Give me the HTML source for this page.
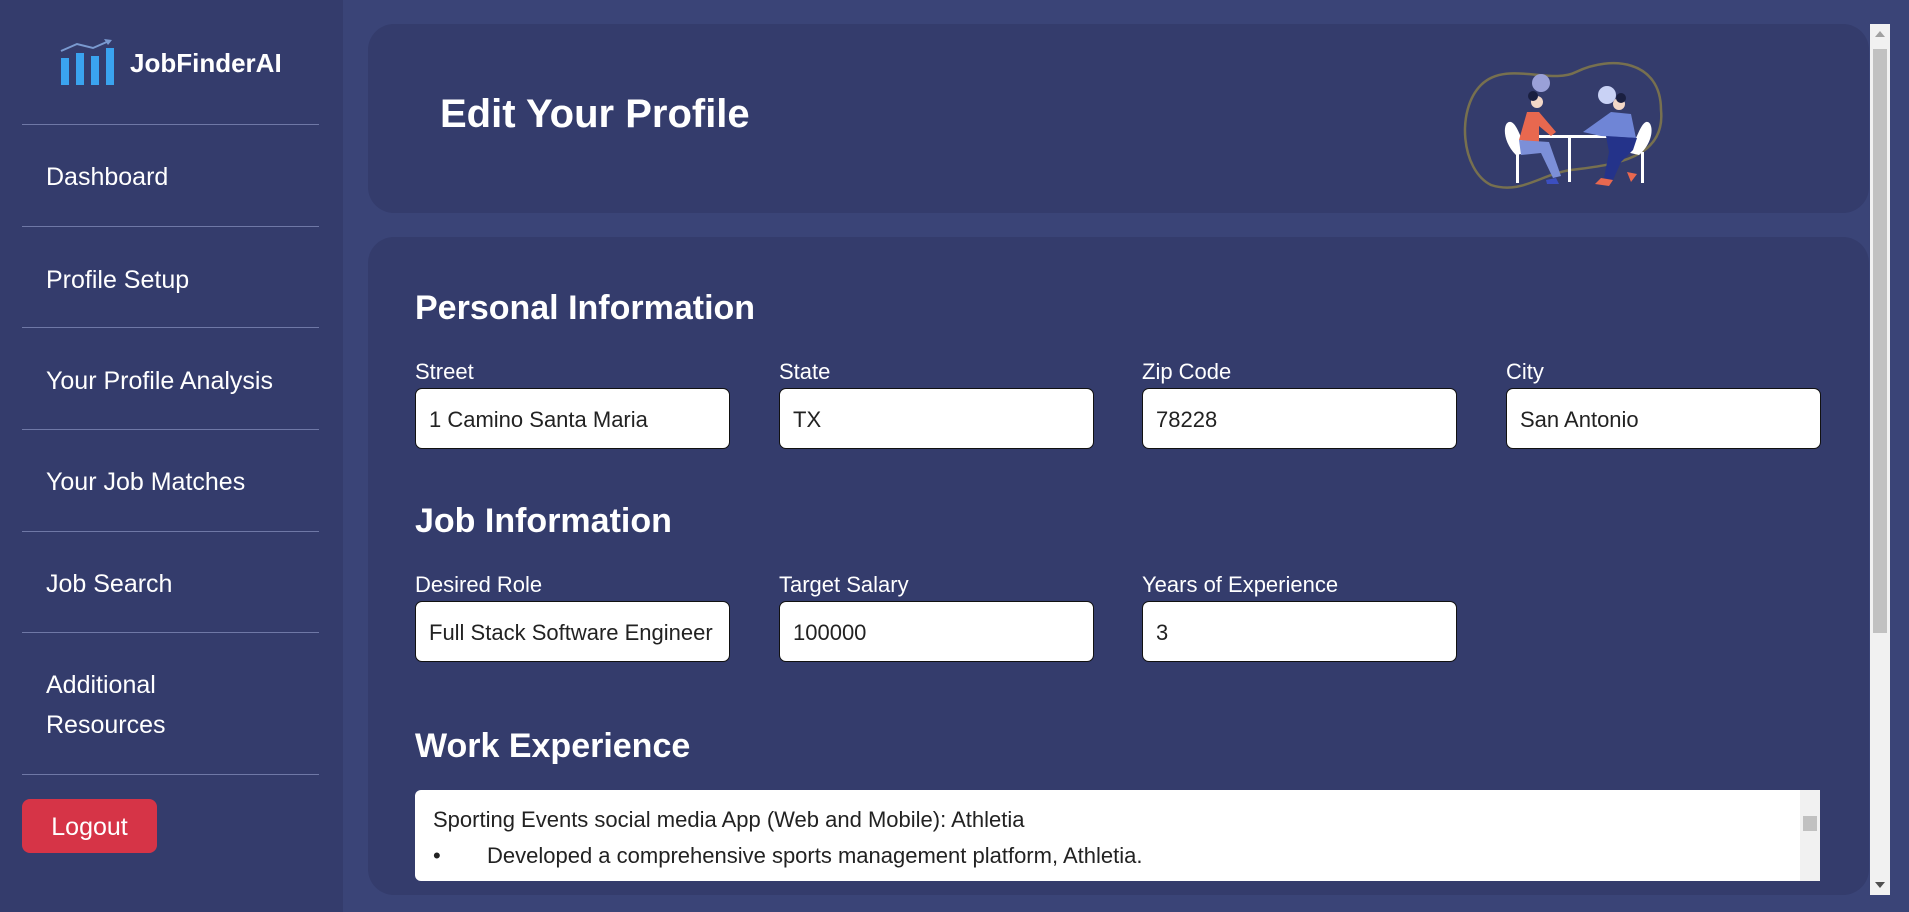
<!DOCTYPE html>
<html><head><meta charset="utf-8"><style>
*{margin:0;padding:0;box-sizing:border-box}
body{width:1909px;height:912px;overflow:hidden;background:#3a4477;font-family:"Liberation Sans",sans-serif;color:#fff;position:relative}
.side{position:absolute;left:0;top:0;width:343px;height:912px;background:#343c6c}
.hr{position:absolute;left:22px;width:297px;height:1px;background:#6f78a6}
.nav{position:absolute;left:46px;font-size:25px;line-height:40px;color:#fff}
.card{position:absolute;left:368px;width:1501px;background:#343c6c;border-radius:26px}
.h2{position:absolute;left:415px;font-size:34px;font-weight:bold;line-height:40px}
.lbl{position:absolute;font-size:22px;line-height:26px}
.inp{position:absolute;width:315px;height:61px;background:#fff;border:1.5px solid #111;border-radius:7px;color:#222;font-size:22px;line-height:62px;padding-left:13px;white-space:nowrap;overflow:hidden}
</style></head><body>
<div class="side">
<svg style="position:absolute;left:60px;top:38px" width="56" height="48" viewBox="0 0 56 48">
<rect x="1" y="20" width="8" height="27" fill="#3aa3ef"/><rect x="16" y="15" width="8" height="32" fill="#3aa3ef"/><rect x="31" y="18" width="8" height="29" fill="#3aa3ef"/><rect x="46" y="10" width="8" height="37" fill="#3aa3ef"/>
<path d="M1 13 L17 6 L33 10 L49 3" stroke="#7a9ad0" stroke-width="2" fill="none"/><path d="M44 1 L52 2 L48 7 Z" fill="#7a9ad0"/>
</svg>
<div style="position:absolute;left:130px;top:48px;font-size:26px;font-weight:bold">JobFinderAI</div>
<div class="hr" style="top:124px"></div>
<div class="nav" style="top:157px">Dashboard</div>
<div class="hr" style="top:226px"></div>
<div class="nav" style="top:260px">Profile Setup</div>
<div class="hr" style="top:327px"></div>
<div class="nav" style="top:361px">Your Profile Analysis</div>
<div class="hr" style="top:429px"></div>
<div class="nav" style="top:462px">Your Job Matches</div>
<div class="hr" style="top:531px"></div>
<div class="nav" style="top:564px">Job Search</div>
<div class="hr" style="top:632px"></div>
<div class="nav" style="top:665px">Additional</div>
<div class="nav" style="top:705px">Resources</div>
<div class="hr" style="top:774px"></div>
<div style="position:absolute;left:22px;top:799px;width:135px;height:54px;background:#d63447;border-radius:8px;font-size:25px;line-height:56px;text-align:center">Logout</div>
</div>

<div class="card" style="top:24px;height:189px">
<div style="position:absolute;left:72px;top:66px;font-size:40px;font-weight:bold;line-height:48px">Edit Your Profile</div>
<svg style="position:absolute;left:1093px;top:26px" width="215" height="140" viewBox="0 0 215 140">
<path d="M30 135 C0 120 -5 60 20 35 C45 10 90 35 115 22 C150 5 200 10 200 60 C205 110 150 115 110 120 C80 124 60 145 30 135Z" fill="none" stroke="#77704f" stroke-width="2.5"/>
<circle cx="80" cy="33" r="9" fill="#9aa0d8"/><circle cx="146" cy="45" r="9" fill="#c9d2f5"/>
<rect x="71" y="85" width="76" height="3" fill="#fff"/><rect x="107" y="87" width="3" height="45" fill="#fff"/>
<path d="M55 105 C40 90 42 70 50 72 C58 75 60 95 70 102Z" fill="#fff"/><rect x="55" y="102" width="3" height="31" fill="#fff"/>
<path d="M178 105 C195 90 192 70 185 72 C178 75 175 95 165 102Z" fill="#fff"/><rect x="180" y="102" width="3" height="31" fill="#fff"/>
<path d="M58 90 L66 62 L78 62 L95 82 L90 86 L78 76 L78 92Z" fill="#e8684f"/><path d="M58 90 L88 92 L100 126 L92 128 L80 103 L60 105Z" fill="#7c8fd8"/>
<circle cx="76" cy="52" r="6" fill="#f3d8c8"/><circle cx="72" cy="46" r="5" fill="#1a1f40"/>
<path d="M122 82 L150 62 L170 64 L175 88 L140 86Z" fill="#6f85d6"/><path d="M145 86 L176 88 L172 100 L160 112 L152 130 L143 128 L148 102Z" fill="#24338a"/>
<circle cx="158" cy="54" r="6" fill="#f3d8c8"/><circle cx="160" cy="48" r="5" fill="#1a1f40"/>
<path d="M140 128 L152 130 L148 136 L134 134Z" fill="#e8684f"/><path d="M166 122 L176 124 L170 132Z" fill="#e8684f"/>
<path d="M85 130 L95 128 L98 134 L86 134Z" fill="#3c4fc0"/>
</svg>
</div>

<div class="card" style="top:237px;height:658px"></div>
<div class="h2" style="top:288px">Personal Information</div>
<div class="lbl" style="left:415px;top:359px">Street</div>
<div class="lbl" style="left:779px;top:359px">State</div>
<div class="lbl" style="left:1142px;top:359px">Zip Code</div>
<div class="lbl" style="left:1506px;top:359px">City</div>
<div class="inp" style="left:415px;top:388px">1 Camino Santa Maria</div>
<div class="inp" style="left:779px;top:388px">TX</div>
<div class="inp" style="left:1142px;top:388px">78228</div>
<div class="inp" style="left:1506px;top:388px">San Antonio</div>

<div class="h2" style="top:501px">Job Information</div>
<div class="lbl" style="left:415px;top:572px">Desired Role</div>
<div class="lbl" style="left:779px;top:572px">Target Salary</div>
<div class="lbl" style="left:1142px;top:572px">Years of Experience</div>
<div class="inp" style="left:415px;top:601px">Full Stack Software Engineer</div>
<div class="inp" style="left:779px;top:601px">100000</div>
<div class="inp" style="left:1142px;top:601px">3</div>

<div class="h2" style="top:726px">Work Experience</div>
<div style="position:absolute;left:415px;top:790px;width:1405px;height:91px;background:#fff;border-radius:6px;color:#222;font-size:22px">
<div style="position:absolute;left:18px;top:17px">Sporting Events social media App (Web and Mobile): Athletia</div>
<div style="position:absolute;left:18px;top:53px">•</div>
<div style="position:absolute;left:72px;top:53px">Developed a comprehensive sports management platform, Athletia.</div>
<div style="position:absolute;right:0;top:0;width:20px;height:91px;background:#f1f1f1"><div style="position:absolute;left:3px;top:26px;width:14px;height:15px;background:#c1c1c1"></div></div>
</div>

<div style="position:absolute;left:1870px;top:24px;width:20px;height:871px;background:#f1f1f1">
<div style="position:absolute;left:3px;top:25px;width:14px;height:584px;background:#c1c1c1"></div>
<div style="position:absolute;left:5px;top:7px;width:0;height:0;border-left:5px solid transparent;border-right:5px solid transparent;border-bottom:6px solid #a0a0a0"></div>
<div style="position:absolute;left:5px;bottom:7px;width:0;height:0;border-left:5px solid transparent;border-right:5px solid transparent;border-top:6px solid #505050"></div>
</div>
</body></html>
